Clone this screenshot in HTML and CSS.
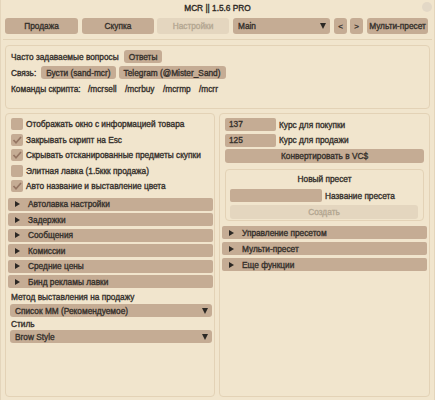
FILE: index.html
```html
<!DOCTYPE html>
<html>
<head>
<meta charset="utf-8">
<link rel="stylesheet" href="styles.css">
</head>
<body>
<div class="win">
  <div class="title">MCR || 1.5.6 PRO</div>
  <div class="close"></div>
  <div class="topbar">
    <div class="btn tab t1">Продажа</div>
    <div class="btn tab t2">Скупка</div>
    <div class="btn tab t3 disabled">Настройки</div>
    <div class="btn combo main"><span>Main</span><span class="down"></span></div>
    <div class="btn small">&lt;</div>
    <div class="btn small">&gt;</div>
    <div class="btn multi">Мульти-пресет</div>
  </div>
  <div class="sep"></div>
  <div class="child info">
    <div class="irow"><span>Часто задаваемые вопросы</span><div class="btn ib">Ответы</div></div>
    <div class="irow"><span>Связь:</span><div class="btn ib">Бусти (sand-mcr)</div><div class="btn ib">Telegram (@Mister_Sand)</div></div>
    <div class="irow cmds"><span>Команды скрипта:</span><span>/mcrsell</span><span>/mcrbuy</span><span>/mcrmp</span><span>/mcrr</span></div>
  </div>
  <div class="cols">
    <div class="child left">
      <div class="checks">
        <div class="crow"><span class="box"></span><span>Отображать окно с информацией товара</span></div>
        <div class="crow"><span class="box on"><svg viewBox="0 0 12 12"><polyline points="2.5,6 5,8.8 10,3"/></svg></span><span>Закрывать скрипт на Esc</span></div>
        <div class="crow"><span class="box on"><svg viewBox="0 0 12 12"><polyline points="2.5,6 5,8.8 10,3"/></svg></span><span>Скрывать отсканированные предметы скупки</span></div>
        <div class="crow"><span class="box"></span><span>Элитная лавка (1.5ккк продажа)</span></div>
        <div class="crow"><span class="box on"><svg viewBox="0 0 12 12"><polyline points="2.5,6 5,8.8 10,3"/></svg></span><span>Авто название и выставление цвета</span></div>
      </div>
      <div class="heads">
        <div class="head"><span class="tri"></span>Автолавка настройки</div>
        <div class="head"><span class="tri"></span>Задержки</div>
        <div class="head"><span class="tri"></span>Сообщения</div>
        <div class="head"><span class="tri"></span>Комиссии</div>
        <div class="head"><span class="tri"></span>Средние цены</div>
        <div class="head"><span class="tri"></span>Бинд рекламы лавки</div>
      </div>
      <div class="lbl">Метод выставления на продажу</div>
      <div class="btn combo wide"><span>Список ММ (Рекомендуемое)</span><span class="down"></span></div>
      <div class="lbl l2">Стиль</div>
      <div class="btn combo wide"><span>Brow Style</span><span class="down"></span></div>
    </div>
    <div class="child right">
      <div class="frow"><div class="input">137</div><span>Курс для покупки</span></div>
      <div class="frow"><div class="input">125</div><span>Курс для продажи</span></div>
      <div class="btn convert">Конвертировать в VC$</div>
      <div class="child preset">
        <div class="ptitle">Новый пресет</div>
        <div class="frow"><div class="input pname"></div><span>Название пресета</span></div>
        <div class="btn create disabled">Создать</div>
      </div>
      <div class="heads rh">
        <div class="head"><span class="tri"></span>Управление пресетом</div>
        <div class="head"><span class="tri"></span>Мульти-пресет</div>
        <div class="head"><span class="tri"></span>Еще функции</div>
      </div>
    </div>
  </div>
</div>
</body>
</html>
```
FILE: styles.css
```css
* { box-sizing: border-box; }
html, body { margin: 0; padding: 0; }
body {
  width: 435px; height: 400px; overflow: hidden;
  background: #f1e5cd;
  font-family: "Liberation Sans", Arial, sans-serif;
  font-size: 8.3px; font-weight: 400;
  -webkit-text-stroke: 0.35px currentColor;
  color: #36312c;
  white-space: nowrap;
}
.win {
  position: relative;
  width: 435px; height: 400px;
  padding: 0 4px;
  border-left: 1px solid #e4d5bb;
  border-right: 1px solid #e4d5bb;
}
.title {
  height: 18px; line-height: 16px; text-align: center;
  color: #2c2824;
}
.close {
  position: absolute; right: 2px; top: 2px;
  width: 10px; height: 10px; border-radius: 50%;
  background: #e3d8c6;
}
.btn {
  background: #c5ac94;
  border-radius: 3px;
  display: flex; align-items: center; justify-content: center;
  flex: none;
}
.btn.disabled { background: #e4d6bf; color: #b4a792; }
.topbar { display: flex; height: 16px; }
.t1 { width: 73px; margin-right: 4px; }
.t2 { width: 72px; margin-right: 3px; }
.t3 { width: 72px; margin-right: 4px; }
.combo { justify-content: space-between; padding: 0 4px 0 5px; }
.main { width: 97px; margin-right: 4px; }
.down {
  width: 0; height: 0;
  border-left: 3px solid transparent; border-right: 3px solid transparent;
  border-top: 6px solid #2c2824;
}
.small { width: 13px; margin-right: 3px; font-size: 8px; }
.multi { width: 61px; margin-left: 1px; }
.sep { height: 1px; background: #e2d2b6; margin: 5px -2px 5px -2px; }
.child {
  border: 1px solid #e3d2b6;
  border-radius: 4px;
}
.info {
  height: 64px; padding: 4px 5px;
  display: flex; flex-direction: column; gap: 3px;
}
.irow { display: flex; align-items: center; height: 13px; gap: 3px; }
.irow > span { flex: none; }
.irow > span:first-child { margin-right: 2px; }
.ib { height: 13px; padding: 0 5px; }
.cmds { gap: 0; }
.cmds > span:first-child { margin-right: 0; }
.cmds span:nth-child(1) { width: 77px; }
.cmds span:nth-child(2) { width: 37px; }
.cmds span:nth-child(3) { width: 38px; }
.cmds span:nth-child(4) { width: 36px; }
.cols { display: flex; gap: 4px; margin-top: 4px; height: 284px; }
.left { width: 210px; padding: 4px 1px 0 2px; flex: none; }
.right { width: 211px; padding: 4px 2px 0 2px; flex: none; }
.checks { padding-left: 3px; }
.crow { display: flex; align-items: center; height: 15.5px; gap: 3px; }
.crow:first-child { margin-top: -1.5px; }
.box { width: 12px; height: 12px; background: #c5ac94; border-radius: 2px; display: block; flex: none; }
.box svg { width: 12px; height: 12px; display: block; }
.box polyline { fill: none; stroke: #957663; stroke-width: 1.7; }
.heads { display: flex; flex-direction: column; gap: 2.5px; margin-top: 3.5px; }
.head {
  height: 13px; background: #c5ac94; border-radius: 2px;
  display: flex; align-items: center; padding-left: 7px;
}
.tri {
  width: 0; height: 0; margin-right: 8px;
  border-top: 3.5px solid transparent; border-bottom: 3.5px solid transparent;
  border-left: 5px solid #2c2824;
}
.lbl { height: 10px; line-height: 10px; margin: 4px 0 0 3px; }
.lbl.l2 { margin-top: 2px; }
.wide { height: 13px; margin: 2px 1px 0 2px; }
.l2 + .wide { margin-top: 1px; }
.frow { display: flex; align-items: center; gap: 3px; height: 13px; margin-left: 3px; margin-bottom: 2.5px; }
.input { width: 51px; height: 13px; background: #c5ac94; border-radius: 2px; padding-left: 4px; line-height: 13px; flex: none; }
.convert { height: 14px; margin: 0 3px 0 3px; }
.preset { margin: 6px 3px 0 3px; height: 52px; padding: 4px 4px 0 4px; }
.ptitle { text-align: center; height: 10px; line-height: 10px; margin-bottom: 5px; }
.preset .frow { margin-left: 0; margin-bottom: 3px; }
.pname { width: 92px; }
.create { height: 14px; margin-right: 1px; }
.rh { margin-top: 5px; gap: 3px; }
```
